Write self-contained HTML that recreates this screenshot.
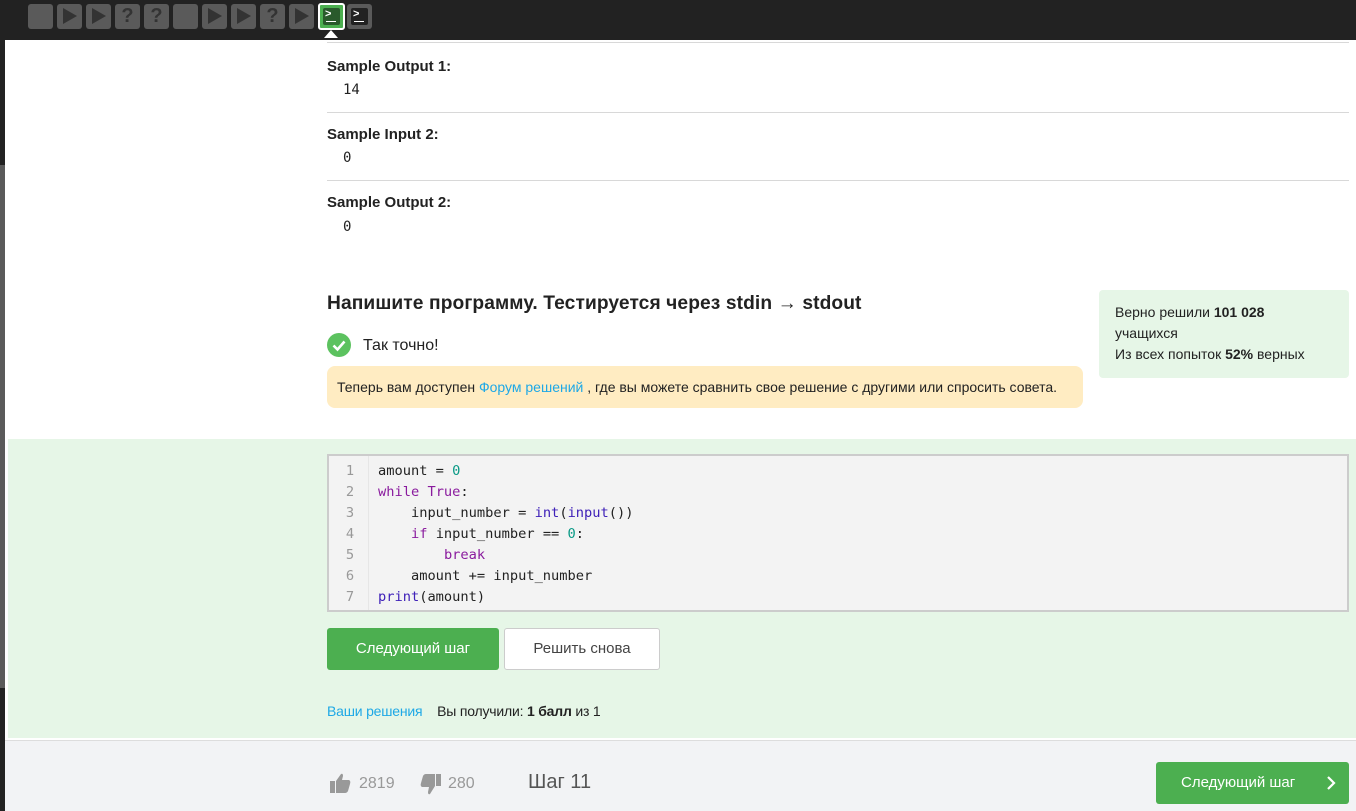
<!DOCTYPE html>
<html><head><meta charset="utf-8"><style>
*{margin:0;padding:0;box-sizing:border-box}
body{width:1356px;height:811px;overflow:hidden;background:#fff;font-family:"Liberation Sans","Noto Sans CJK SC",sans-serif;position:relative;color:#222}
.abs{position:absolute}
.top{left:0;top:0;width:1356px;height:40px;background:#222}
.b{position:absolute;top:4px;width:25px;height:25px;background:#5a5a5a;border-radius:3px;color:#333;font-weight:bold;font-size:20px;text-align:center;line-height:25px}
.tri{width:0;height:0;border-left:14px solid #333;border-top:8px solid transparent;border-bottom:8px solid transparent;position:absolute;left:6px;top:4px}
.lbl{font-weight:bold;font-size:15px;left:327px}
.mono{font-family:"DejaVu Sans Mono","Liberation Mono",monospace;font-size:14px;left:343px}
.hr{left:327px;width:1022px;height:1px;background:#d8d8d8}
.code{font-family:"DejaVu Sans Mono","Liberation Mono",monospace;font-size:13.7px;line-height:21px}
.kw{color:#8a1b9e}.fn{color:#3e20b8}.nm{color:#0a9a86}
</style></head><body>
<div class="abs top"></div>
<div class="b" style="left:28px"></div>
<div class="b" style="left:57px"><div class="tri"></div></div>
<div class="b" style="left:86px"><div class="tri"></div></div>
<div class="b" style="left:115px">?</div>
<div class="b" style="left:144px">?</div>
<div class="b" style="left:173px"></div>
<div class="b" style="left:202px"><div class="tri"></div></div>
<div class="b" style="left:231px"><div class="tri"></div></div>
<div class="b" style="left:260px">?</div>
<div class="b" style="left:289px"><div class="tri"></div></div>
<div class="b" style="left:318px;top:3px;width:27px;height:27px;background:#4caf50;border:2px solid #fff"><div style="position:absolute;left:3px;top:3px;width:17px;height:17px;background:#2a5a2c;border-radius:2px;color:#fff;font-size:11px;line-height:13px;text-align:left;padding-left:2px">&gt;<div style="position:absolute;left:3px;bottom:3px;width:10px;height:1.5px;background:#fff"></div></div></div>
<div class="abs" style="left:324px;top:30px;border-left:7px solid transparent;border-right:7px solid transparent;border-bottom:8px solid #fff"></div>
<div class="b" style="left:347px"><div style="position:absolute;left:4px;top:4px;width:17px;height:17px;background:#222;border-radius:2px;color:#fff;font-size:11px;line-height:13px;text-align:left;padding-left:2px">&gt;<div style="position:absolute;left:3px;bottom:3px;width:10px;height:1.5px;background:#fff"></div></div></div>

<div class="abs" style="left:0;top:40px;width:5px;height:125px;background:#222"></div>
<div class="abs" style="left:0;top:165px;width:5px;height:523px;background:#5a5a5a"></div>
<div class="abs" style="left:0;top:688px;width:5px;height:123px;background:#222"></div>

<div class="abs hr" style="top:42px"></div>
<div class="abs lbl" style="top:58px">Sample Output 1:</div>
<div class="abs mono" style="top:82px">14</div>
<div class="abs hr" style="top:112px"></div>
<div class="abs lbl" style="top:126px">Sample Input 2:</div>
<div class="abs mono" style="top:150px">0</div>
<div class="abs hr" style="top:180px"></div>
<div class="abs lbl" style="top:194px">Sample Output 2:</div>
<div class="abs mono" style="top:219px">0</div>

<div class="abs" style="left:327px;top:293px;font-size:19.2px;font-weight:bold;color:#222;letter-spacing:0.1px">Напишите программу. Тестируется через stdin → stdout</div>
<div class="abs" style="left:327px;top:333px;width:24px;height:24px;border-radius:50%;background:#5cc25f"><svg width="24" height="24"><path d="M6.5 12.5l4 4 7-8" stroke="#fff" stroke-width="2.6" fill="none"/></svg></div>
<div class="abs" style="left:363px;top:337px;font-size:16px">Так точно!</div>
<div class="abs" style="left:327px;top:366px;width:756px;height:42px;background:#ffecc2;border-radius:8px;font-size:14px;line-height:42px;padding-left:10px">Теперь вам доступен <span style="color:#1ea8e6">Форум решений</span> , где вы можете сравнить свое решение с другими или спросить совета.</div>
<div class="abs" style="left:1099px;top:290px;width:250px;height:88px;background:#e6f6e7;border-radius:4px;font-size:14px;line-height:21px;padding:12px 16px">Верно решили <b>101 028</b><br>учащихся<br>Из всех попыток <b>52%</b> верных</div>

<div class="abs" style="left:8px;top:439px;width:1348px;height:299px;background:#e6f6e7"></div>
<div class="abs" style="left:327px;top:454px;width:1022px;height:158px;background:#f3f3f3;border:2px solid #ccc"></div>
<div class="abs" style="left:368px;top:456px;width:1px;height:154px;background:#e6e6e6"></div>
<div class="abs code" style="left:335px;top:461px;width:30px;text-align:center;color:#999">1<br>2<br>3<br>4<br>5<br>6<br>7</div>
<pre class="abs code" style="left:378px;top:461px;color:#222">amount = <span class="nm">0</span>
<span class="kw">while</span> <span class="kw">True</span>:
    input_number = <span class="fn">int</span>(<span class="fn">input</span>())
    <span class="kw">if</span> input_number == <span class="nm">0</span>:
        <span class="kw">break</span>
    amount += input_number
<span class="fn">print</span>(amount)</pre>
<div class="abs" style="left:327px;top:628px;width:172px;height:42px;background:#4caf50;border-radius:3px;color:#fff;font-size:15px;text-align:center;line-height:42px">Следующий шаг</div>
<div class="abs" style="left:504px;top:628px;width:156px;height:42px;background:#fff;border:1px solid #ccc;border-radius:3px;color:#444;font-size:15px;text-align:center;line-height:40px">Решить снова</div>
<div class="abs" style="left:327px;top:703px;font-size:14px;letter-spacing:-0.2px"><span style="color:#1ea8e6">Ваши решения</span>&nbsp;&nbsp;&nbsp; Вы получили: <b>1 балл</b> из 1</div>

<div class="abs" style="left:5px;top:740px;width:1351px;height:71px;background:#f2f3f5;border-top:1px solid #ddd"></div>
<svg class="abs" style="left:330px;top:772px" width="22" height="22" viewBox="0 0 22 22"><rect x="0" y="9" width="5" height="12" fill="#999"/><path d="M6 9 L11 2 Q13 1 13 4 L12 8 H19 Q21 9 20 12 L18 19 Q17 21 15 21 H6Z" fill="#999"/></svg>
<div class="abs" style="left:359px;top:775px;font-size:16px;color:#999">2819</div>
<svg class="abs" style="left:419px;top:774px" width="22" height="22" viewBox="0 0 22 22"><rect x="17" y="0" width="5" height="12" fill="#999"/><path d="M16 12 L11 20 Q9 21 9 18 L10 13 H3 Q1 12 2 9 L4 2 Q5 0 7 0 H16Z" fill="#999"/></svg>
<div class="abs" style="left:448px;top:775px;font-size:16px;color:#999">280</div>
<div class="abs" style="left:528px;top:771px;font-size:20px;color:#555">Шаг 11</div>
<div class="abs" style="left:1156px;top:762px;width:193px;height:42px;background:#4caf50;border-radius:3px;color:#fff;font-size:15px;line-height:42px;padding-left:25px">Следующий шаг<svg style="position:absolute;left:170px;top:14px" width="10" height="14"><path d="M2 1l6 6-6 6" stroke="#fff" stroke-width="2.2" fill="none"/></svg></div>
</body></html>
